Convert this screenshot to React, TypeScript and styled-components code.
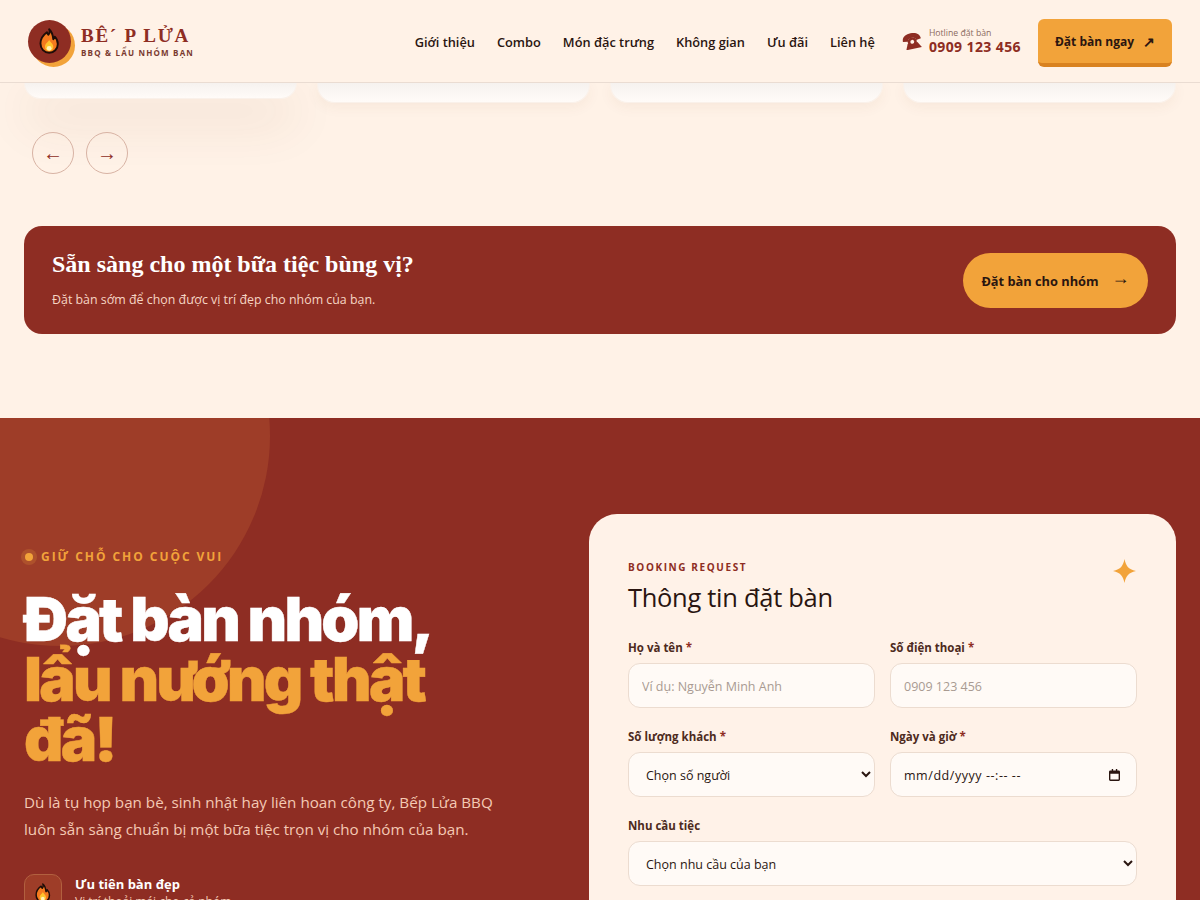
import styled, { createGlobalStyle } from "styled-components";

const GlobalStyle = createGlobalStyle`
  html, body {
    margin: 0;
    padding: 0;
    background: #fff2e7;
    overflow: hidden;
  }
  * { box-sizing: border-box; }
  body {
    font-family: "Open Sans", "Noto Sans", sans-serif;
    color: #2a1510;
  }
`;

const Page = styled.div`
  width: 1200px;
  height: 900px;
  overflow: hidden;
`;

const Header = styled.header`
  height: 83px;
  padding: 0 28px;
  display: flex;
  align-items: center;
  background: #fff2e7;
  border-bottom: 1px solid #eadcd2;
  position: relative;
  z-index: 2;
`;

const Logo = styled.div`
  display: flex;
  align-items: center;
  gap: 10px;
  margin-right: auto;
`;

const LogoMark = styled.div`
  width: 43px;
  height: 43px;
  border-radius: 50%;
  background: #8e2d23;
  box-shadow: 4px 4px 0 #f2a33a;
  display: flex;
  align-items: center;
  justify-content: center;
`;

const LogoText = styled.div`
  display: flex;
  flex-direction: column;
  padding-top: 1px;
`;

const LogoName = styled.div`
  font-family: "Liberation Serif", serif;
  font-weight: 700;
  font-size: 19px;
  line-height: 22px;
  letter-spacing: 1.75px;
  color: #8e2d23;
`;

const LogoTag = styled.div`
  font-size: 8px;
  line-height: 12px;
  font-weight: 700;
  letter-spacing: 1.2px;
  color: #7a3a30;
`;

const Nav = styled.nav`
  display: flex;
  gap: 22px;
  margin: 2px 27px 0 0;
`;

const NavLink = styled.a`
  font-size: 12.8px;
  font-weight: 600;
  color: #2a1510;
`;

const Hotline = styled.div`
  display: flex;
  align-items: center;
  gap: 7px;
  margin-right: 17px;
`;

const HotlineText = styled.div`
  display: flex;
  flex-direction: column;
`;

const HotlineLabel = styled.span`
  font-size: 8.7px;
  line-height: 12px;
  color: #8b6a60;
`;

const HotlineNumber = styled.span`
  font-size: 14px;
  line-height: 16px;
  font-weight: 700;
  letter-spacing: 0.4px;
  color: #8e2d23;
`;

const HeaderButton = styled.button`
  width: 134px;
  height: 48px;
  margin-top: 3px;
  padding-top: 2px;
  border: 0;
  border-bottom: 4px solid #d98220;
  border-radius: 6px;
  background: #f2a33a;
  color: #2a1510;
  font-family: inherit;
  font-size: 12px;
  font-weight: 700;
  display: flex;
  align-items: center;
  justify-content: center;
  gap: 9px;
`;

const HeaderArrow = styled.span`
  font-size: 14px;
`;

const CardRow = styled.div`
  height: 21px;
  padding: 0 24px;
  display: grid;
  grid-template-columns: repeat(4, 1fr);
  gap: 20px;
`;

const PeekCard = styled.div<{ $raised?: boolean }>`
  height: ${(p) => (p.$raised ? "16px" : "20px")};
  background: linear-gradient(#f6f2ef, #fffbf8);
  border: 1px solid #faf1ea;
  border-top: 0;
  border-radius: 0 0 18px 18px;
  box-shadow: ${(p) =>
    p.$raised
      ? "0 20px 50px rgba(120, 60, 30, 0.16)"
      : "0 4px 14px rgba(120, 60, 30, 0.06)"};
`;

const Arrows = styled.div`
  display: flex;
  gap: 12px;
  padding: 28px 0 0 32px;
`;

const ArrowButton = styled.button`
  width: 42px;
  height: 42px;
  border-radius: 50%;
  border: 1px solid #d8b3a4;
  background: transparent;
  color: #8e2d23;
  font-family: "Open Sans", sans-serif;
  font-size: 20px;
  line-height: 1;
  padding: 0;
`;

const Banner = styled.section`
  margin: 52px 24px 84px;
  height: 108px;
  padding: 0 28px;
  border-radius: 18px;
  background: #8e2d23;
  display: flex;
  align-items: center;
  justify-content: space-between;
`;

const BannerTitle = styled.h2`
  margin: -1px 0 13px;
  font-family: "Liberation Serif", serif;
  font-size: 24px;
  line-height: 28px;
  font-weight: 700;
  color: #fff;
`;

const BannerText = styled.p`
  margin: 0;
  font-size: 12.4px;
  line-height: 18px;
  color: #f6d5c3;
`;

const BannerButton = styled.button`
  width: 185px;
  height: 55px;
  padding-top: 3px;
  border: 0;
  border-radius: 28px;
  background: #f2a33a;
  color: #2a1510;
  font-family: inherit;
  font-size: 12.8px;
  font-weight: 700;
  display: flex;
  align-items: center;
  justify-content: center;
  gap: 13px;
`;

const BannerArrow = styled.span`
  font-size: 18px;
  font-weight: 400;
  line-height: 1;
  margin-top: -8px;
`;

const Booking = styled.section`
  position: relative;
  overflow: hidden;
  background: #8e2d23;
  padding: 96px 24px 0;
  display: grid;
  grid-template-columns: 1fr 587px;
  gap: 60px;
  height: 600px;
`;

const Glow = styled.div`
  position: absolute;
  left: -150px;
  top: -192px;
  width: 420px;
  height: 420px;
  border-radius: 50%;
  background: #9e3d28;
`;

const Intro = styled.div`
  position: relative;
  padding-top: 33px;
`;

const Eyebrow = styled.div`
  display: flex;
  align-items: center;
  gap: 8px;
  font-size: 12px;
  line-height: 20px;
  font-weight: 700;
  letter-spacing: 1.95px;
  color: #f2a33a;
`;

const EyebrowDot = styled.span`
  width: 8px;
  height: 8px;
  border-radius: 50%;
  background: #f2a33a;
  box-shadow: 0 0 0 4px rgba(242, 163, 58, 0.2);
  margin-left: 1px;
`;

const Title = styled.h1`
  margin: 22px 0 0;
  font-family: "Inter", sans-serif;
  font-size: 61px;
  line-height: 60px;
  font-weight: 900;
  letter-spacing: -2.7px;
  -webkit-text-stroke: 0.4px currentColor;
  color: #fff;
`;

const TitleAccent = styled.span`
  color: #f2a33a;
`;

const Lead = styled.p`
  margin: 20px 0 0;
  width: 490px;
  font-size: 15.2px;
  line-height: 27px;
  color: #f4c9b4;
`;

const Perk = styled.div`
  display: flex;
  gap: 13px;
  margin-top: 31px;
`;

const PerkIcon = styled.div`
  width: 38px;
  height: 38px;
  border-radius: 10px;
  border: 1px solid #b2603f;
  background: #9e3d28;
  display: flex;
  align-items: center;
  justify-content: center;
`;

const PerkBody = styled.div`
  padding-top: 1px;
`;

const PerkTitle = styled.div`
  font-size: 13px;
  line-height: 18px;
  font-weight: 700;
  color: #fff;
`;

const PerkText = styled.div`
  font-size: 12px;
  line-height: 18px;
  color: #f4c9b4;
`;

const FormCard = styled.form`
  position: relative;
  height: 560px;
  padding: 46px 39px 0;
  background: #fff2e8;
  border-radius: 28px;
`;

const Sparkle = styled.svg`
  position: absolute;
  top: 45px;
  right: 40px;
`;

const FormEyebrow = styled.div`
  font-size: 10px;
  line-height: 14px;
  font-weight: 700;
  letter-spacing: 1.6px;
  color: #8e2d23;
`;

const FormTitle = styled.h3`
  margin: 5px 0 24px;
  font-size: 25.5px;
  line-height: 36px;
  font-weight: 400;
  letter-spacing: -0.3px;
  color: #2a1510;
`;

const FormGrid = styled.div`
  display: grid;
  grid-template-columns: 1fr 1fr;
  gap: 20px 15px;
`;

const Field = styled.label<{ $wide?: boolean }>`
  display: flex;
  flex-direction: column;
  gap: 7px;
  grid-column: ${(p) => (p.$wide ? "1 / -1" : "auto")};
`;

const LabelText = styled.span`
  font-size: 11.5px;
  line-height: 17px;
  font-weight: 700;
  color: #4d2a20;
`;

const Required = styled.span`
  color: #8e2d23;
`;

const controlStyles = `
  width: 100%;
  height: 45px;
  border: 1px solid #ecdcd0;
  border-radius: 12px;
  background: #fffaf6;
  font-family: "Open Sans", sans-serif;
  font-size: 12.5px;
  color: #2a1510;
  outline: none;
`;

const Input = styled.input`
  ${controlStyles}
  padding: 2px 13px 0;

  &::placeholder {
    color: #a99a92;
  }
`;

const Select = styled.select`
  ${controlStyles}
  padding: 2px 13px 0;
`;

const DateBox = styled.div`
  ${controlStyles}
  padding: 0 16px 0 13px;
  display: flex;
  align-items: center;
  justify-content: space-between;
`;

const DateInput = styled.input`
  flex: 1;
  min-width: 0;
  border: 0;
  padding: 2px 0 0;
  background: transparent;
  font: inherit;
  letter-spacing: 0.55px;
  color: inherit;
  outline: none;

  &::placeholder {
    color: #2a1510;
    opacity: 1;
  }
`;

const Flame = ({ height }: { height: number }) => (
  <svg width={height * 0.78} height={height} viewBox="0 0 23 30" aria-hidden="true">
    <path
      d="M11.500 1.500c1.500 2.800 .3 4.800-.8 6.300C9.800 6.800 9.300 6 9 4.800 5.600 7.200 1.500 11.500 1.500 18c0 6 4.300 10.500 10 10.500s10-4.300 10-10c0-3.800-1.700-6.700-3.500-8.500-.3 1.400-.8 2.300-1.700 3C15.800 8.300 14.800 4 11.500 1.500z"
      fill="#f47a1f"
      stroke="#1e0d08"
      strokeWidth="2.200"
      strokeLinejoin="round"
    />
    <path
      d="M11.500 13.500c-.4 2.600-4.800 4.100-4.800 8 0 3 2.200 5 4.800 5s4.800-2 4.800-5c0-3.500-3.600-5-4.800-8z"
      fill="#ffc42e"
    />
    <ellipse cx="11.500" cy="23.500" rx="2.800" ry="2.700" fill="#fff4b8" />
  </svg>
);

const PhoneIcon = () => (
  <svg width="20" height="18" viewBox="0 0 24 21" aria-hidden="true">
    <g transform="rotate(-12 12 10)" fill="#8e2d23">
      <path d="M1 9.500C1 3.500 6 1 12 1s11 2.500 11 8.500l-6 1c0-2.500-2-4-5-4s-5 1.500-5 4z" />
      <path d="M6 13h12l4 7H3z" />
      <circle cx="12" cy="11.500" r="5.500" />
      <circle cx="12" cy="11.500" r="2.300" fill="#fff2e7" />
    </g>
  </svg>
);

const CalendarIcon = () => (
  <svg width="11" height="12" viewBox="0 0 12 13" aria-hidden="true">
    <path d="M3 0h1.500v1.500h3V0H9v1.500h1.500A1.500 1.500 0 0 1 12 3v8.500a1.500 1.500 0 0 1-1.500 1.500h-9A1.500 1.500 0 0 1 0 11.500V3a1.500 1.500 0 0 1 1.500-1.500H3zM1.500 5v6.500h9V5z" fill="#2a1510" />
  </svg>
);

const App = () => {
  return (
    <Page>
      <GlobalStyle />
      <Header>
        <Logo>
          <LogoMark>
            <Flame height={26} />
          </LogoMark>
          <LogoText>
            <LogoName>BÊ´ P LỬA</LogoName>
            <LogoTag>BBQ &amp; LẨU NHÓM BẠN</LogoTag>
          </LogoText>
        </Logo>
        <Nav>
          {["Giới thiệu", "Combo", "Món đặc trưng", "Không gian", "Ưu đãi", "Liên hệ"].map(
            (item) => (
              <NavLink key={item}>{item}</NavLink>
            )
          )}
        </Nav>
        <Hotline>
          <PhoneIcon />
          <HotlineText>
            <HotlineLabel>Hotline đặt bàn</HotlineLabel>
            <HotlineNumber>0909 123 456</HotlineNumber>
          </HotlineText>
        </Hotline>
        <HeaderButton>
          Đặt bàn ngay <HeaderArrow>↗</HeaderArrow>
        </HeaderButton>
      </Header>

      <CardRow>
        <PeekCard $raised />
        <PeekCard />
        <PeekCard />
        <PeekCard />
      </CardRow>

      <Arrows>
        <ArrowButton>←</ArrowButton>
        <ArrowButton>→</ArrowButton>
      </Arrows>

      <Banner>
        <div>
          <BannerTitle>Sẵn sàng cho một bữa tiệc bùng vị?</BannerTitle>
          <BannerText>Đặt bàn sớm để chọn được vị trí đẹp cho nhóm của bạn.</BannerText>
        </div>
        <BannerButton>
          Đặt bàn cho nhóm <BannerArrow>→</BannerArrow>
        </BannerButton>
      </Banner>

      <Booking>
        <Glow />
        <Intro>
          <Eyebrow>
            <EyebrowDot />
            GIỮ CHỖ CHO CUỘC VUI
          </Eyebrow>
          <Title>
            Đặt bàn nhóm,
            <br />
            <TitleAccent>
              lẩu nướng thật
              <br />
              đã!
            </TitleAccent>
          </Title>
          <Lead>
            Dù là tụ họp bạn bè, sinh nhật hay liên hoan công ty, Bếp Lửa BBQ luôn sẵn sàng chuẩn bị
            một bữa tiệc trọn vị cho nhóm của bạn.
          </Lead>
          <Perk>
            <PerkIcon>
              <Flame height={20} />
            </PerkIcon>
            <PerkBody>
              <PerkTitle>Ưu tiên bàn đẹp</PerkTitle>
              <PerkText>Vị trí thoải mái cho cả nhóm</PerkText>
            </PerkBody>
          </Perk>
        </Intro>

        <FormCard>
          <Sparkle width="23" height="24" viewBox="0 0 23 24" aria-hidden="true">
            <path d="M11.500 0c1.500 7 3.500 10 11.500 12-8 2-10 5-11.500 12C10 17 8 14 0 12c8-2 10-5 11.500-12z" fill="#f2a33a" />
          </Sparkle>
          <FormEyebrow>BOOKING REQUEST</FormEyebrow>
          <FormTitle>Thông tin đặt bàn</FormTitle>
          <FormGrid>
            <Field>
              <LabelText>
                Họ và tên <Required>*</Required>
              </LabelText>
              <Input placeholder="Ví dụ: Nguyễn Minh Anh" />
            </Field>
            <Field>
              <LabelText>
                Số điện thoại <Required>*</Required>
              </LabelText>
              <Input placeholder="0909 123 456" />
            </Field>
            <Field>
              <LabelText>
                Số lượng khách <Required>*</Required>
              </LabelText>
              <Select defaultValue="">
                <option value="">Chọn số người</option>
              </Select>
            </Field>
            <Field>
              <LabelText>
                Ngày và giờ <Required>*</Required>
              </LabelText>
              <DateBox>
                <DateInput placeholder="mm/dd/yyyy --:-- --" />
                <CalendarIcon />
              </DateBox>
            </Field>
            <Field $wide>
              <LabelText>Nhu cầu tiệc</LabelText>
              <Select defaultValue="">
                <option value="">Chọn nhu cầu của bạn</option>
              </Select>
            </Field>
          </FormGrid>
        </FormCard>
      </Booking>
    </Page>
  );
};

export default App;
